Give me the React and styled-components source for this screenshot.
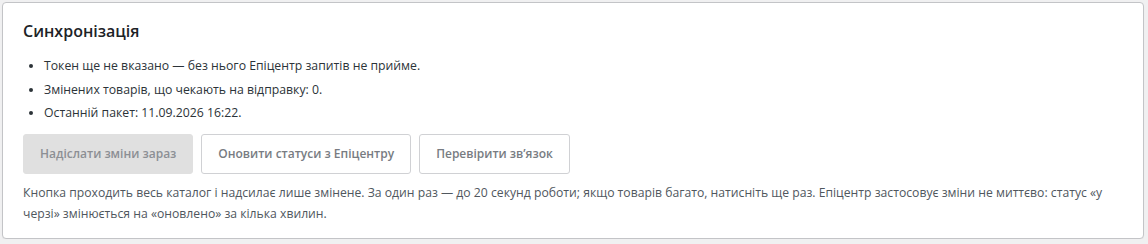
import React from "react"
import styled, { createGlobalStyle } from "styled-components"

const GlobalStyle = createGlobalStyle`
  html, body {
    margin: 0;
    padding: 0;
    background: #f0f0f1;
  }
  body {
    padding: 2px 4px 0 2px;
    font-family: "Open Sans", "Noto Sans", sans-serif;
    color: #1d2327;
  }
`

const Card = styled.section`
  background: #fff;
  border: 1px solid #c3c4c7;
  border-radius: 4px;
  padding: 16px 20px 14px 20px;
  box-shadow: 0 1px 1px rgba(0, 0, 0, 0.04);
`

const Title = styled.h2`
  margin: 0 0 11px;
  font-size: 16px;
  font-weight: 600;
  line-height: 1.5;
  color: #1d2327;
`

const List = styled.ul`
  margin: 0 0 9px;
  padding-left: 21px;
  list-style: disc;
`

const Item = styled.li`
  font-size: 12.25px;
  line-height: 23.5px;
  color: #2c3338;

  &::marker {
    font-size: 11px;
  }
`

const Actions = styled.div`
  display: flex;
  gap: 8px;
  margin-bottom: 8px;
`

const Button = styled.button`
  font-family: inherit;
  font-size: 12px;
  font-weight: 600;
  height: 40px;
  padding: 0 16px;
  border-radius: 3px;
  border: 1px solid ${(p) => (p.$disabled ? "#e0e0e0" : "#d0d1d4")};
  background: ${(p) => (p.$disabled ? "#e0e0e0" : "#fff")};
  color: ${(p) => (p.$disabled ? "#8c8f94" : "#787c82")};
  cursor: ${(p) => (p.$disabled ? "default" : "pointer")};
`

const Note = styled.p`
  margin: 0;
  font-size: 12.2px;
  line-height: 21px;
  color: #50575e;
`

export default function App() {
  return (
    <>
      <GlobalStyle />
      <Card>
        <Title>Синхронізація</Title>
        <List>
          <Item>Токен ще не вказано — без нього Епіцентр запитів не прийме.</Item>
          <Item>Змінених товарів, що чекають на відправку: 0.</Item>
          <Item>Останній пакет: 11.09.2026 16:22.</Item>
        </List>
        <Actions>
          <Button $disabled>Надіслати зміни зараз</Button>
          <Button>Оновити статуси з Епіцентру</Button>
          <Button>Перевірити зв’язок</Button>
        </Actions>
        <Note>
          Кнопка проходить весь каталог і надсилає лише змінене. За один раз — до 20 секунд
          роботи; якщо товарів багато, натисніть ще раз. Епіцентр застосовує зміни не миттєво:
          статус «у черзі» змінюється на «оновлено» за кілька хвилин.
        </Note>
      </Card>
    </>
  )
}
